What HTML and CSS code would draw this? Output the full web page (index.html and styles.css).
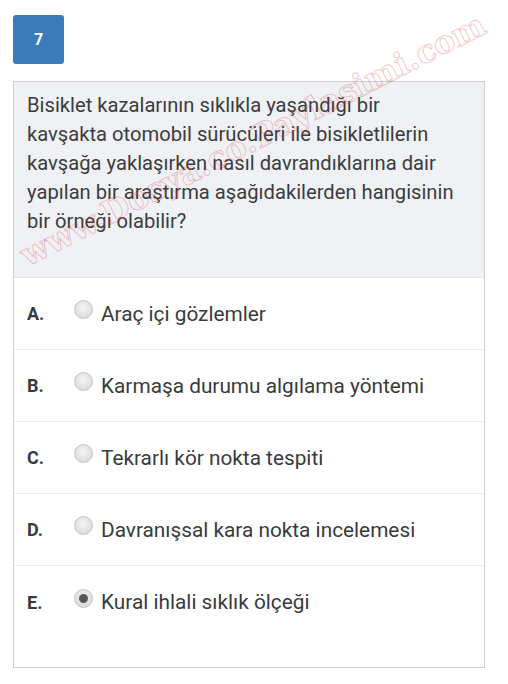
FILE: index.html
```html
<!DOCTYPE html>
<html lang="tr">
<head>
<meta charset="utf-8">
<link rel="stylesheet" href="styles.css">
</head>
<body>
<div class="page">
  <div class="badge">7</div>
  <div class="card">
    <div class="question">Bisiklet kazalarının sıklıkla yaşandığı bir<br>kavşakta otomobil sürücüleri ile bisikletlilerin<br>kavşağa yaklaşırken nasıl davrandıklarına dair<br>yapılan bir araştırma aşağıdakilerden hangisinin<br>bir örneği olabilir?</div>
    <div class="option"><span class="letter">A.</span><span class="radio"></span><span class="text">Araç içi gözlemler</span></div>
    <div class="option"><span class="letter">B.</span><span class="radio"></span><span class="text">Karmaşa durumu algılama yöntemi</span></div>
    <div class="option"><span class="letter">C.</span><span class="radio"></span><span class="text">Tekrarlı kör nokta tespiti</span></div>
    <div class="option"><span class="letter">D.</span><span class="radio"></span><span class="text">Davranışsal kara nokta incelemesi</span></div>
    <div class="option last"><span class="letter">E.</span><span class="radio checked"></span><span class="text">Kural ihlali sıklık ölçeği</span></div>
  </div>
  <div class="watermark">www.Dosya.co.Paylasimi.com</div>
</div>
</body>
</html>
```
FILE: styles.css
```css
html, body { margin: 0; padding: 0; background: #fff; }
body { font-family: Roboto, "Noto Sans", sans-serif; color: #3a3d40; overflow: hidden; }
.page { position: relative; padding: 15px 23px 0 13px; }
.badge {
  width: 51px; height: 49px; box-sizing: border-box;
  background: #3b7bbd; border-radius: 3px;
  color: #fff; font-weight: bold; font-size: 16px;
  display: flex; align-items: center; justify-content: center;
}
.card {
  margin-top: 17px; width: 472px; box-sizing: border-box;
  border: 1px solid #cfd0d2; padding-bottom: 29px;
}
.question {
  background: #eff1f5; height: 196px; box-sizing: border-box;
  padding: 9px 8px 0 13px; font-size: 20.2px; line-height: 29px;
  border-bottom: 1px solid #e6e7e9; white-space: nowrap;
}
.option {
  height: 72px; box-sizing: border-box; display: flex; align-items: center;
  padding-left: 13px; font-size: 20.8px; border-bottom: 1px solid #eceeef;
}
.option.last { border-bottom: none; }
.letter { width: 47px; font-weight: bold; font-size: 18px; color: #383b3e; }
.radio {
  width: 19px; height: 19px; box-sizing: border-box; border-radius: 50%;
  border: 1px solid #c4c4c4; margin-right: 8px; margin-top: -8px;
  background: radial-gradient(circle at 50% 40%, #f4f4f4 0%, #dcdcdc 70%, #cfcfcf 100%);
  display: flex; align-items: center; justify-content: center;
}
.radio.checked::after {
  content: ""; width: 9px; height: 9px; border-radius: 50%; background: #555;
}
.text { color: #383b3e; }
.watermark {
  position: absolute; left: 14px; top: 240px;
  transform: rotate(-27deg); transform-origin: left top;
  font-family: "DejaVu Serif", serif; font-weight: bold; font-size: 32px;
  color: transparent; -webkit-text-stroke: 1px rgba(220, 60, 60, 0.3);
  pointer-events: none; white-space: nowrap;
}
```
